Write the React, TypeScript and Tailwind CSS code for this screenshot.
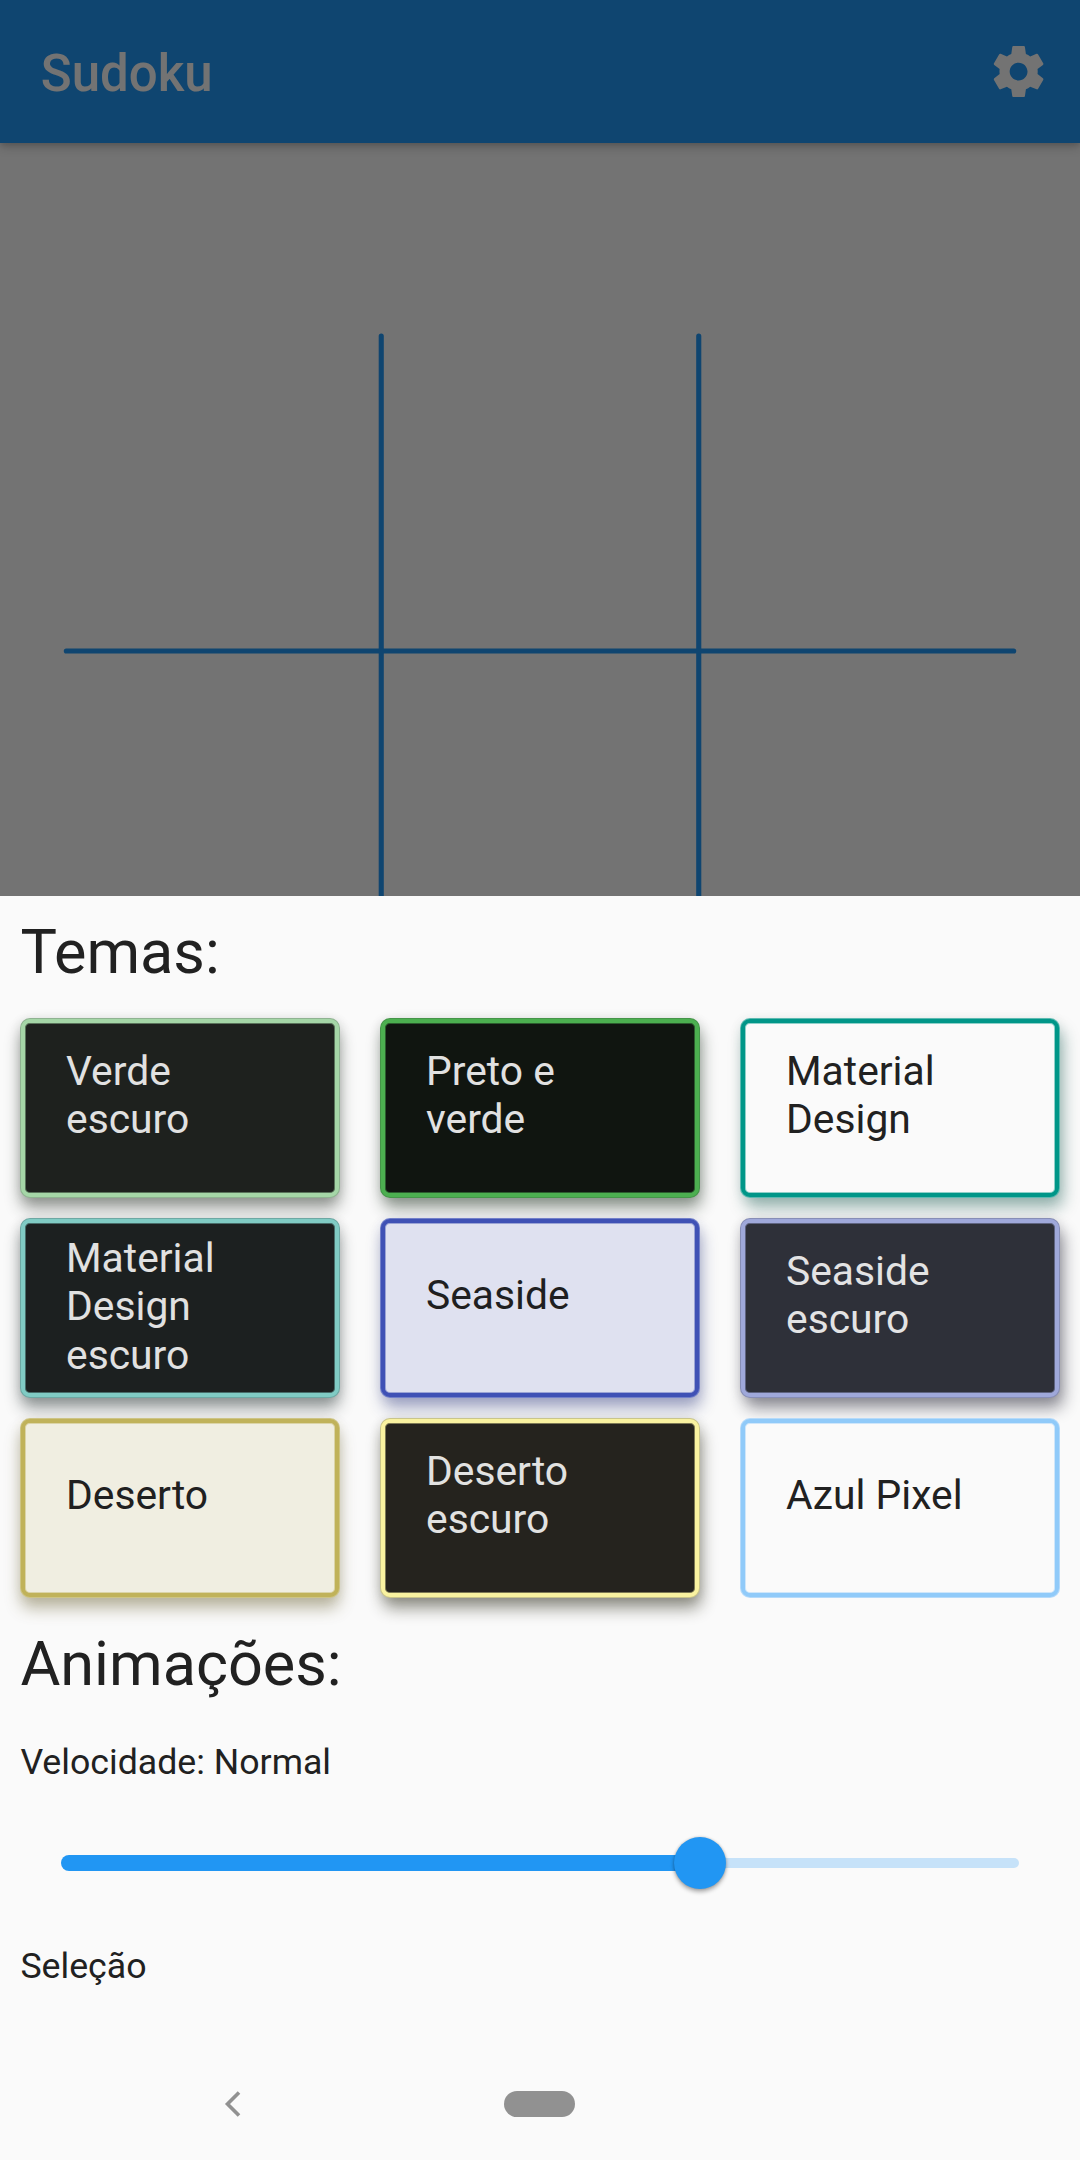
type Theme = { lines: string[]; box: string; pad: string };

const themes: Theme[] = [
  {
    lines: ['Verde', 'escuro'],
    pad: 'pt-[24px]',
    box: 'bg-[#1e211e] border-[#a5d6a7] text-[#e1e1e1] shadow-[inset_0_0_0_1px_#5a735b,0_0_0_1px_#8fb391,0_11px_16px_0px_rgba(30,40,30,0.46),0_1px_12px_rgba(30,40,30,0.14)]',
  },
  {
    lines: ['Preto e', 'verde'],
    pad: 'pt-[24px]',
    box: 'bg-[#101510] border-[#4caf50] text-[#e1e1e1] shadow-[inset_0_0_0_1px_#2c5c2e,0_0_0_1px_#459549,2px_11px_16px_0px_rgba(18,38,20,0.46),0_1px_12px_rgba(18,38,20,0.14)]',
  },
  {
    lines: ['Material', 'Design'],
    pad: 'pt-[24px]',
    box: 'bg-[#fafafa] border-[#009688] text-[#212121] shadow-[inset_0_0_0_1px_#8fd0c9,0_0_0_1px_#5cb9b0,4px_11px_16px_0px_rgba(0,75,65,0.39),0_1px_12px_rgba(0,75,65,0.1)]',
  },
  {
    lines: ['Material', 'Design', 'escuro'],
    pad: 'pt-[11px]',
    box: 'bg-[#1c2020] border-[#80cbc4] text-[#e1e1e1] shadow-[inset_0_0_0_1px_#486d6a,0_0_0_1px_#6da8a3,0_11px_16px_0px_rgba(25,38,38,0.46),0_1px_12px_rgba(25,38,38,0.14)]',
  },
  {
    lines: ['Seaside'],
    pad: 'pt-[48px]',
    box: 'bg-[#dfe1f0] border-[#3f51b5] text-[#1f1f21] shadow-[inset_0_0_0_1px_#9ba4d5,0_0_0_1px_#7280c9,2px_11px_16px_0px_rgba(35,45,120,0.41),0_1px_12px_rgba(35,45,120,0.1)]',
  },
  {
    lines: ['Seaside', 'escuro'],
    pad: 'pt-[24px]',
    box: 'bg-[#2e3039] border-[#9fa8da] text-[#e3e3e4] shadow-[inset_0_0_0_1px_#5f6481,0_0_0_1px_#878eb6,4px_11px_16px_0px_rgba(35,35,50,0.49),0_1px_12px_rgba(35,35,50,0.14)]',
  },
  {
    lines: ['Deserto'],
    pad: 'pt-[48px]',
    box: 'bg-[#f0eee1] border-[#c0b25a] text-[#20201f] shadow-[inset_0_0_0_1px_#dbd4a8,0_0_0_1px_#cdc485,0_11px_16px_0px_rgba(95,85,35,0.41),0_1px_12px_rgba(95,85,35,0.1)]',
  },
  {
    lines: ['Deserto', 'escuro'],
    pad: 'pt-[24px]',
    box: 'bg-[#25231e] border-[#f9f2a0] text-[#e2e2e1] shadow-[inset_0_0_0_1px_#7d7955,0_0_0_1px_#c9c58b,2px_11px_16px_0px_rgba(38,38,20,0.49),0_1px_12px_rgba(38,38,20,0.14)]',
  },
  {
    lines: ['Azul Pixel'],
    pad: 'pt-[48px]',
    box: 'bg-[#fafafa] border-[#90caf9] text-[#212121] shadow-[inset_0_0_0_1px_#cfe6fa,0_0_0_1px_#b5dafa]',
  },
];

function ThemeCard({ theme }: { theme: Theme }) {
  return (
    <button
      className={`m-px block h-[178px] rounded-[9px] border-4 pl-[41px] text-left align-top text-[40.8px] leading-[48.3px] ${theme.box}`}
    >
      <span className={`block h-full ${theme.pad}`}>
        {theme.lines.map((line) => (
          <span key={line} className="block whitespace-nowrap">
            {line}
          </span>
        ))}
      </span>
    </button>
  );
}

function Board() {
  return (
    <svg
      className="mx-auto mt-[190px] shrink-0"
      width="954"
      height="954"
      viewBox="63 333 954 954"
      stroke="#2196f3"
      strokeWidth="5.1"
      strokeLinecap="round"
    >
      <path d="M381.25 336v948M698.75 336v948M66.3 651h947.4M66.3 968.5h947.4" />
    </svg>
  );
}

export default function App() {
  return (
    <div className="relative h-[2160px] w-[1080px] overflow-hidden bg-[#fafafa] font-['Roboto',sans-serif]">
      <header className="relative flex h-[143px] items-center justify-between bg-[#2196f3] pr-[30.5px] pl-[40.8px] text-[#fafafa] shadow-[0_4px_10px_rgba(0,0,0,0.2),0_2px_5px_rgba(0,0,0,0.1)]">
        <h1 className="pt-[4px] text-[51px] leading-[60px] font-medium">Sudoku</h1>
        <svg width="61.2" height="61.2" viewBox="0 0 24 24" fill="currentColor">
          <path d="M19.43 12.98c.04-.32.07-.64.07-.98s-.03-.66-.07-.98l2.11-1.65c.19-.15.24-.42.12-.64l-2-3.46c-.12-.22-.39-.3-.61-.22l-2.49 1c-.52-.4-1.08-.73-1.69-.98l-.38-2.65C14.46 2.18 14.25 2 14 2h-4c-.25 0-.46.18-.49.42l-.38 2.65c-.61.25-1.17.59-1.69.98l-2.49-1c-.23-.09-.49 0-.61.22l-2 3.46c-.13.22-.07.49.12.64l2.11 1.65c-.04.32-.07.65-.07.98s.03.66.07.98l-2.11 1.65c-.19.15-.24.42-.12.64l2 3.46c.12.22.39.3.61.22l2.49-1c.52.4 1.08.73 1.69.98l.38 2.65c.03.24.24.42.49.42h4c.25 0 .46-.18.49-.42l.38-2.65c.61-.25 1.17-.59 1.69-.98l2.49 1c.23.09.49 0 .61-.22l2-3.46c.12-.22.07-.49-.12-.64l-2.11-1.65zM12 15.5c-1.93 0-3.5-1.57-3.5-3.5s1.57-3.5 3.5-3.5 3.5 1.57 3.5 3.5-1.57 3.5-3.5 3.5z" />
        </svg>
      </header>
      <Board />

      <div className="absolute inset-0 flex flex-col bg-black/54 pt-[896px]">
        <section className="flex flex-1 flex-col bg-[#fafafa] text-[#212121]">
          <h2 className="mt-[20px] ml-[20.4px] h-[72px] text-[61.2px] leading-[72px]">Temas:</h2>
          <div className="mx-[20px] mt-[30px] grid grid-cols-3 gap-x-[40px] gap-y-[20px]">
            {themes.map((theme) => (
              <ThemeCard key={theme.lines.join(' ')} theme={theme} />
            ))}
          </div>
          <h2 className="mt-[30px] ml-[20.4px] h-[72px] text-[61.2px] leading-[72px]">Animações:</h2>
          <p className="mt-[41px] ml-[20.4px] h-[42px] text-[35.7px] leading-[42px]">Velocidade: Normal</p>

          <div className="mt-[41px] mr-[61px] ml-[61px] flex h-[78px] items-center">
            <div className="h-[16px] w-[639px] rounded-l-[8px] bg-[#2196f3]" />
            <div className="relative -mx-[26px] size-[52px] rounded-full bg-[#2196f3] shadow-[0_3px_4px_rgba(0,0,0,0.3),0_0_3px_rgba(0,0,0,0.2)]" />
            <div className="h-[10px] flex-1 rounded-r-[5px] bg-[#c6e2f9]" />
          </div>

          <p className="mt-[43px] ml-[20.4px] h-[42px] text-[35.7px] leading-[42px]">Seleção</p>

          <nav className="mt-auto flex h-[113px] items-center pl-[224px]">
            <svg width="17" height="26" viewBox="0 0 17 26" fill="none" stroke="#919191" strokeWidth="3.6">
              <path d="M15 1.5 3.5 13 15 24.5" />
            </svg>
            <div className="ml-[263px] h-[26px] w-[71px] rounded-full bg-[#919191]" />
          </nav>
        </section>
      </div>
    </div>
  );
}
